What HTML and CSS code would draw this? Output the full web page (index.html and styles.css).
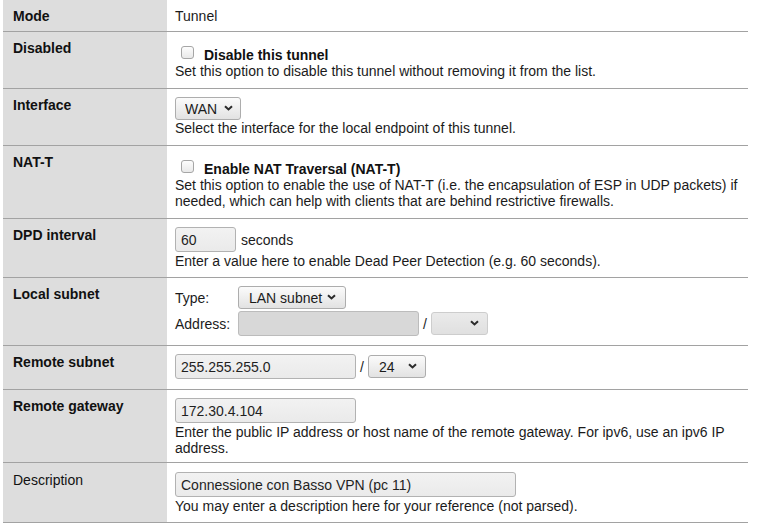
FILE: index.html
```html
<!DOCTYPE html>
<html>
<head>
<meta charset="utf-8">
<title>IPsec Phase 1</title>
<link rel="stylesheet" href="styles.css">
</head>
<body>
<div class="form">
  <div class="row">
    <div class="label">Mode</div>
    <div class="value value--mode">Tunnel</div>
  </div>

  <div class="row">
    <div class="label">Disabled</div>
    <div class="value">
      <label class="check"><input type="checkbox" class="checkbox"><b>Disable this tunnel</b></label>
      <div class="help">Set this option to disable this tunnel without removing it from the list.</div>
    </div>
  </div>

  <div class="row">
    <div class="label">Interface</div>
    <div class="value">
      <span class="select select--wan"><select><option>WAN</option></select><svg class="chev" width="9" height="6" viewBox="0 0 9 6"><path d="M1 1.2l3.5 3.3 3.5-3.3" fill="none" stroke="#2b2b2b" stroke-width="2"/></svg></span>
      <div class="help">Select the interface for the local endpoint of this tunnel.</div>
    </div>
  </div>

  <div class="row">
    <div class="label">NAT-T</div>
    <div class="value">
      <label class="check"><input type="checkbox" class="checkbox"><b>Enable NAT Traversal (NAT-T)</b></label>
      <div class="help">Set this option to enable the use of NAT-T (i.e. the encapsulation of ESP in UDP packets) if needed, which can help with clients that are behind restrictive firewalls.</div>
    </div>
  </div>

  <div class="row">
    <div class="label">DPD interval</div>
    <div class="value value--pb8">
      <div class="field field--wide"><input class="input input--dpd" type="text" value="60"><span>seconds</span></div>
      <div class="help">Enter a value here to enable Dead Peer Detection (e.g. 60 seconds).</div>
    </div>
  </div>

  <div class="row">
    <div class="label">Local subnet</div>
    <div class="value">
      <div class="subnet">
        <span>Type:</span>
        <span class="select select--lan"><select><option>LAN subnet</option></select><svg class="chev" width="9" height="6" viewBox="0 0 9 6"><path d="M1 1.2l3.5 3.3 3.5-3.3" fill="none" stroke="#2b2b2b" stroke-width="2"/></svg></span>
        <span>Address:</span>
        <div class="field field--plain">
          <input class="input input--addr" type="text" disabled>
          <span>/</span>
          <span class="select select--mask select--disabled"><select disabled><option></option></select><svg class="chev" width="9" height="6" viewBox="0 0 9 6"><path d="M1 1.2l3.5 3.3 3.5-3.3" fill="none" stroke="#2b2b2b" stroke-width="2"/></svg></span>
        </div>
      </div>
    </div>
  </div>

  <div class="row">
    <div class="label">Remote subnet</div>
    <div class="value">
      <div class="field">
        <input class="input input--addr" type="text" value="255.255.255.0">
        <span>/</span>
        <span class="select select--bits"><select><option>24</option></select><svg class="chev" width="9" height="6" viewBox="0 0 9 6"><path d="M1 1.2l3.5 3.3 3.5-3.3" fill="none" stroke="#2b2b2b" stroke-width="2"/></svg></span>
      </div>
    </div>
  </div>

  <div class="row">
    <div class="label">Remote gateway</div>
    <div class="value value--pb6">
      <div class="field"><input class="input input--addr" type="text" value="172.30.4.104"></div>
      <div class="help">Enter the public IP address or host name of the remote gateway. For ipv6, use an ipv6 IP address.</div>
    </div>
  </div>

  <div class="row">
    <div class="label label--normal">Description</div>
    <div class="value value--desc">
      <div class="field"><input class="input input--desc" type="text" value="Connessione con Basso VPN (pc 11)"></div>
      <div class="help">You may enter a description here for your reference (not parsed).</div>
    </div>
  </div>
</div>
</body>
</html>
```

FILE: styles.css
```css
html, body {
  margin: 0;
  padding: 0;
  background: #ffffff;
}

body {
  font-family: "Liberation Sans", Arial, sans-serif;
  font-size: 14px;
  line-height: 16px;
  color: #1b1b1b;
}

.form {
  margin-left: 3px;
  width: 745px;
}

.row {
  display: grid;
  grid-template-columns: 164px 1fr;
  border-bottom: 1px solid #a2a2a2;
}

.label {
  background: #dddddd;
  padding: 8px 10px 0;
  font-weight: bold;
  color: #111;
}

.label--normal {
  font-weight: normal;
  padding-top: 9px;
}

.value {
  padding: 8px 8px 9px 8px;
}

.value--mode { padding-bottom: 7px; }
.value--pb8 { padding-bottom: 8px; }
.value--pb6 { padding-bottom: 6px; }
.value--desc { padding-top: 9px; padding-bottom: 8px; }

.check {
  display: block;
  margin-top: 7px;
  height: 16px;
}

.checkbox {
  -webkit-appearance: none;
  appearance: none;
  display: inline-block;
  vertical-align: top;
  width: 13px;
  height: 13px;
  margin: -1px 10px 0 6px;
  box-sizing: border-box;
  border: 1px solid #a6a6a6;
  border-radius: 3px;
  background: linear-gradient(#fdfdfd, #e9e9e9);
}

.check b {
  font-weight: bold;
  color: #111;
}

.select {
  position: relative;
  display: inline-block;
  vertical-align: top;
  justify-self: start;
}

.select select {
  -webkit-appearance: none;
  appearance: none;
  display: block;
  height: 23px;
  box-sizing: border-box;
  margin: 0;
  padding: 0 0 0 9px;
  border: 1px solid #adadad;
  border-radius: 3px;
  background: linear-gradient(#fbfbfb, #e2e2e2);
  font-family: inherit;
  font-size: 14px;
  color: #1b1b1b;
}

.select .chev {
  position: absolute;
  right: 8px;
  top: 8px;
  pointer-events: none;
}

.select--wan select { width: 66px; }
.select--lan select { width: 108px; padding-left: 10px; }
.select--mask select { width: 57px; }
.select--bits select { width: 58px; padding-left: 10px; }
.select--lan .chev { right: 10px; }
.select--mask .chev,
.select--bits .chev { right: 9px; }

.select--disabled select {
  background: linear-gradient(#e2e2e2, #d4d4d4);
  border-color: #b8b8b8;
}

.field {
  display: flex;
  align-items: center;
  gap: 4px;
  height: 25px;
  margin-bottom: 1px;
}

.field--wide { gap: 5px; }
.field--plain { margin-bottom: 0; }

.input {
  height: 25px;
  box-sizing: border-box;
  margin: 0;
  padding: 0 5px;
  border: 1px solid #b2b2b2;
  border-radius: 3px;
  background: linear-gradient(#f2f2f2, #eaeaea);
  font-family: inherit;
  font-size: 14px;
  color: #1f1f1f;
}

.input:disabled {
  background: #d8d8d8;
  border-color: #bcbcbc;
}

.input--dpd { width: 61px; }
.input--addr { width: 181px; }
.input--desc { width: 341px; }

.subnet {
  display: grid;
  grid-template-columns: 63px auto;
  row-gap: 2px;
  align-items: center;
  justify-content: start;
  justify-items: start;
}

.help {
  color: #1b1b1b;
}
```
